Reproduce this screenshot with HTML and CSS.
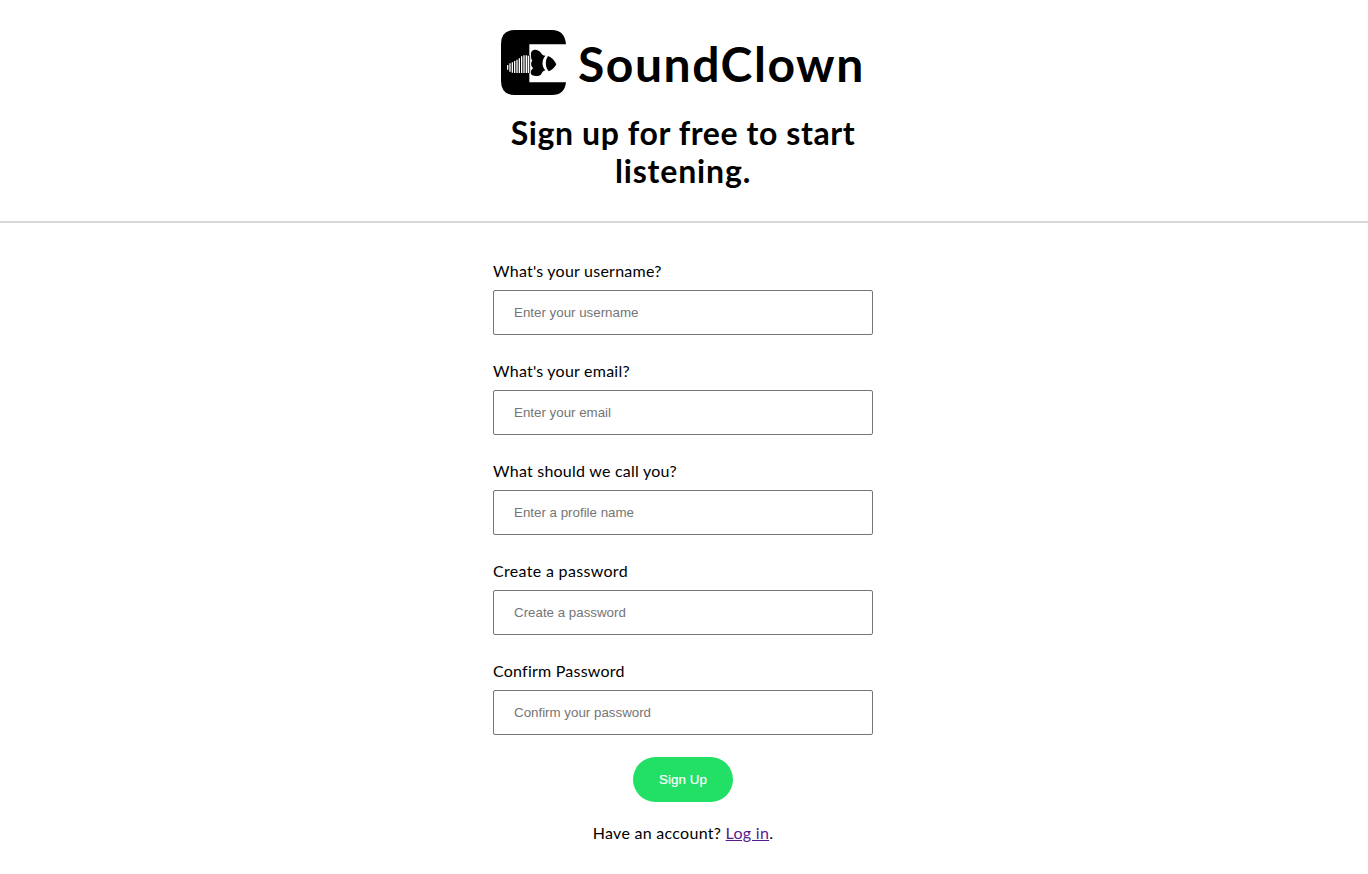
FILE: index.html
```html
<!DOCTYPE html>
<html lang="en">
<head>
<meta charset="utf-8">
<title>SoundClown</title>
<link rel="stylesheet" href="styles.css">
</head>
<body>
<header class="header">
  <div class="brand">
    <svg class="logo" viewBox="0 0 195 195" aria-hidden="true">
      <path d="M42 0H153Q191 0 195 43H85V157H195Q191 195 153 195H42Q0 195 0 153V42Q0 0 42 0Z"/>
      <path stroke="#fff" stroke-width="4" fill="none" d="M20 105V119M27 100V125M34 97V128M41 93V129M48 89V129M55 85V129M62 79V129M69 76V129M76 76V129M82 77V129"/>
      <path d="M90 74C88 60 103 56 112 62C119 65 120 70 126 76L133 77C122 90 122 109 133 121C127 123 124 126 121 132C116 140 102 139 92 135C87 127 90 119 97 114C90 110 88 98 94 92C90 88 90 81 90 74Z"/>
      <path d="M141 78C152 81 160 91 166 103C160 114 152 121 143 124C132 111 132 91 141 78Z"/>
      <path d="M86 76V130" stroke="#000" stroke-width="2"/>
    </svg>
    <span class="name">SoundClown</span>
  </div>
  <h1 class="title"><span class="line1">Sign up for free to start</span><br><span class="line2">listening.</span></h1>
</header>
<form class="form">
  <label class="field"><span class="label">What's your username?</span><input class="input" type="text" placeholder="Enter your username"></label>
  <label class="field"><span class="label">What's your email?</span><input class="input" type="text" placeholder="Enter your email"></label>
  <label class="field"><span class="label">What should we call you?</span><input class="input" type="text" placeholder="Enter a profile name"></label>
  <label class="field"><span class="label wide">Create a password</span><input class="input" type="password" placeholder="Create a password"></label>
  <label class="field"><span class="label">Confirm Password</span><input class="input" type="password" placeholder="Confirm your password"></label>
  <button class="submit" type="button">Sign Up</button>
  <p class="login">Have an account? <a class="link" href="#">Log in</a>.</p>
</form>
</body>
</html>
```
FILE: styles.css
```css
body { margin: 0; background: #fff; color: #000; font-family: Lato, sans-serif; font-size: 16px; }
.header { box-sizing: border-box; height: 223px; padding-top: 30px; border-bottom: 2px solid #d9d9d9; }
.brand { display: flex; width: 366px; height: 65px; margin: 0 auto; gap: 12px; align-items: center; }
.logo { width: 65px; height: 65px; flex: none; }
.name { font-size: 48px; font-weight: 700; line-height: 65px; letter-spacing: 1.55px; white-space: nowrap; padding-top: 2px; }
.title { width: 380px; margin: 19px auto 0; padding-right: 2px; font-size: 32px; font-weight: 700; line-height: 38px; text-align: center; white-space: nowrap; }
.line1 { letter-spacing: .6px; }
.line2 { letter-spacing: .85px; }
.form { display: flex; flex-direction: column; align-items: center; width: 380px; margin: 0 auto; padding: 38px 2px 0 0; }
.field { display: block; width: 380px; height: 100px; }
.label { display: block; height: 29px; line-height: 20px; letter-spacing: .23px; white-space: nowrap; }
.wide { letter-spacing: .32px; }
.input { display: block; box-sizing: border-box; width: 380px; height: 45px; padding: 0 20px; border: 1px solid #767676; border-radius: 2px; font: 13.333px "Liberation Sans", sans-serif; }
.input::placeholder { color: #757575; }
.submit { width: 100px; height: 45px; margin: -4px 0 0; padding: 0; border: 0; border-radius: 23px; background: #22e066; color: #fff; font: 13.333px "Liberation Sans", sans-serif; letter-spacing: .1px; -webkit-text-stroke: .2px #fff; }
.login { margin: 21px 0 0; line-height: 20px; letter-spacing: .28px; white-space: nowrap; }
.link { color: #551a8b; }
```
